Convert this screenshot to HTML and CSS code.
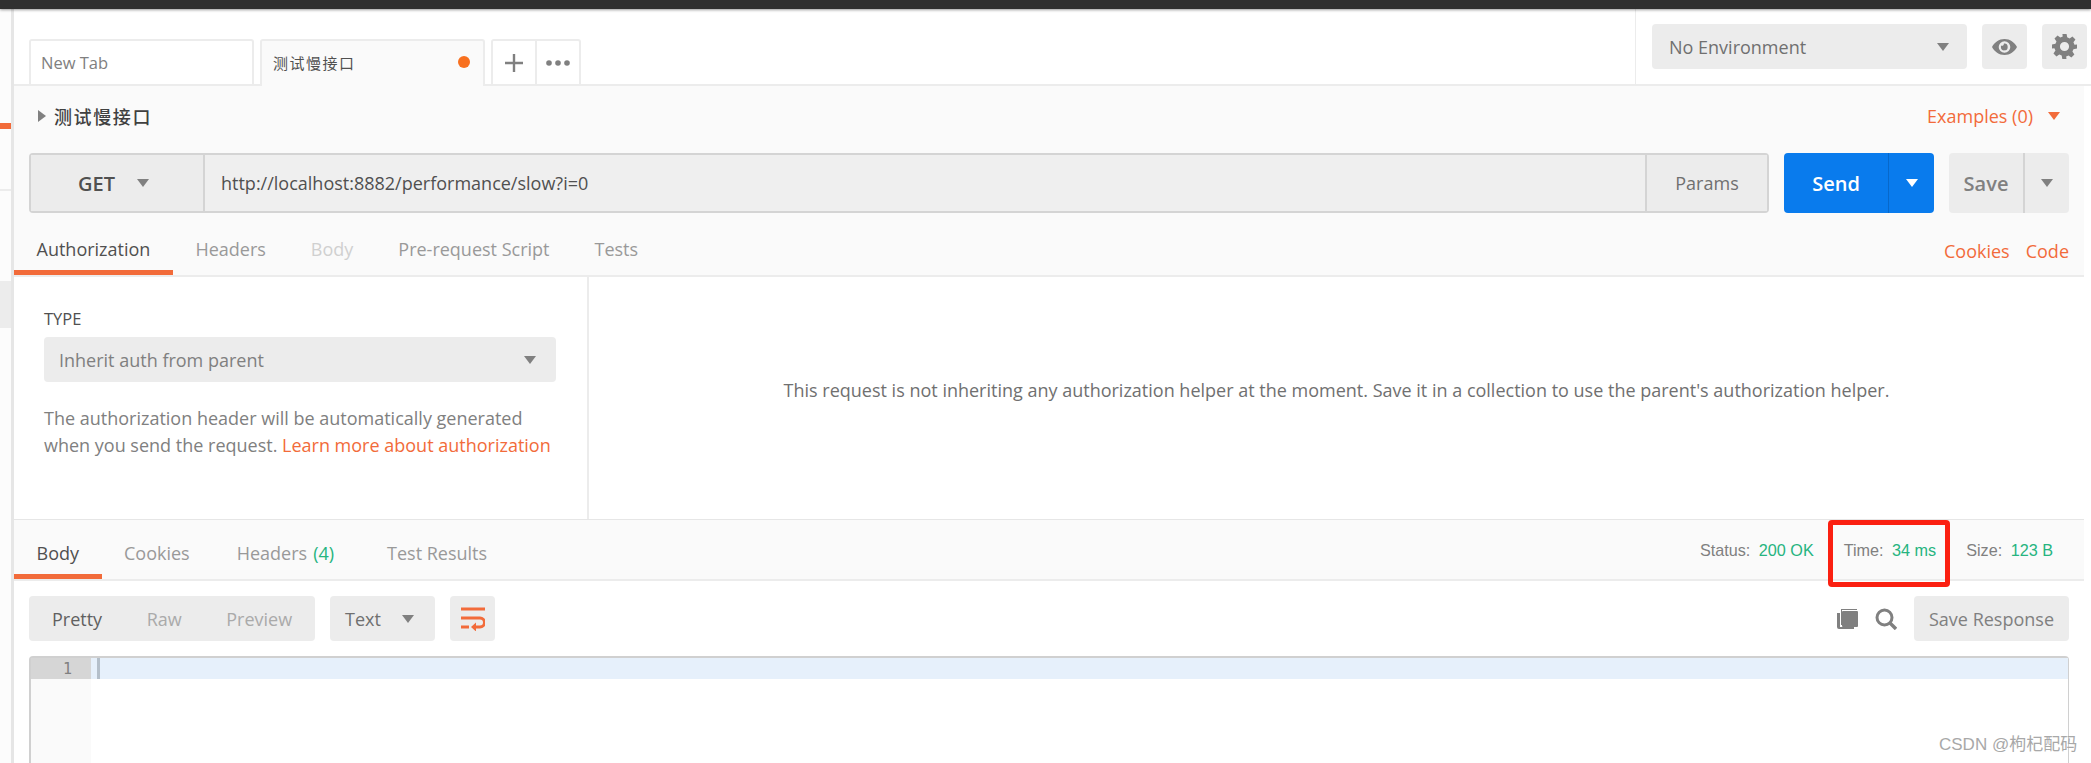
FILE: index.html
```html
<!DOCTYPE html>
<html lang="en">
<head>
    <meta charset="UTF-8">
    <title>Postman</title>
    <link rel="stylesheet" href="styles.css">
</head>
<body>
    <div class="topbar"></div>
    <div class="app">
        <div class="sidebar">
            <div class="side-mark"></div>
            <div class="side-line"></div>
            <div class="side-block"></div>
        </div>
        <div class="main">
            <div class="tabbar">
                <div class="tab">New Tab</div>
                <div class="tab tab-active">
                    <span class="tab-name">测试慢接口</span>
                    <span class="dot"></span>
                </div>
                <div class="tab-tools">
                    <div class="tab-tool">
                        <svg width="18" height="18" viewBox="0 0 18 18"><path d="M9 0v18M0 9h18" stroke="#808080" stroke-width="2.4" fill="none"/></svg>
                    </div>
                    <div class="tab-tool tab-more">
                        <svg width="24" height="6" viewBox="0 0 24 6"><circle cx="3" cy="3" r="2.8" fill="#808080"/><circle cx="12" cy="3" r="2.8" fill="#808080"/><circle cx="21" cy="3" r="2.8" fill="#808080"/></svg>
                    </div>
                </div>
                <div class="env">
                    <div class="env-select">
                        <span>No Environment</span>
                        <span class="caret"></span>
                    </div>
                    <div class="icon-btn">
                        <svg width="25" height="16" viewBox="0 0 25 16"><path fill-rule="evenodd" fill="#808080" d="M12.5 0C18 0 22.5 3.4 25 8c-2.500 4.600-7 8-12.500 8S2.500 12.600 0 8C2.500 3.400 7 0 12.500 0zm0 2.200a5.800 5.800 0 1 0 0 11.600 5.800 5.800 0 0 0 0-11.600zm-.6 2.400a3.400 3.400 0 1 1-3 3.400c0-.5.100-1 .3-1.400a1.900 1.900 0 0 0 2.700-2z"/></svg>
                    </div>
                    <div class="icon-btn">
                        <svg width="25" height="25" viewBox="0 0 24 24"><path fill="#808080" fill-rule="evenodd" d="M10 0h4l.6 3.200 2.300 1 2.700-1.900 2.900 2.900-1.900 2.700 1 2.300L24 10v4l-3.400.6-1 2.300 1.900 2.700-2.900 2.900-2.700-1.900-2.300 1L13.900 24h-4l-.6-3.400-2.300-1-2.700 1.900-2.900-2.900 1.900-2.700-1-2.300L0 14v-4l3.300-.6 1-2.300-1.900-2.700 2.900-2.900 2.700 1.900 2.300-1zM12 7.600a4.400 4.400 0 1 0 0 8.800 4.400 4.400 0 0 0 0-8.800z"/></svg>
                    </div>
                </div>
            </div>

            <div class="request">
                <div class="name-row">
                    <span class="arrow-right"></span>
                    <span class="req-name">测试慢接口</span>
                    <span class="examples">Examples (0)</span>
                    <span class="caret caret-orange"></span>
                </div>
                <div class="url-row">
                    <div class="url-box">
                        <div class="method">
                            <span>GET</span>
                            <span class="caret"></span>
                        </div>
                        <div class="url">http://localhost:8882/performance/slow?i=0</div>
                        <div class="params">Params</div>
                    </div>
                    <div class="split-btn send">
                        <div class="split-main">Send</div>
                        <div class="split-side"><span class="caret caret-white"></span></div>
                    </div>
                    <div class="split-btn save">
                        <div class="split-main">Save</div>
                        <div class="split-side"><span class="caret"></span></div>
                    </div>
                </div>
                <div class="tabs-row">
                    <div class="subtab subtab-on">Authorization</div>
                    <div class="subtab">Headers</div>
                    <div class="subtab subtab-off">Body</div>
                    <div class="subtab">Pre-request Script</div>
                    <div class="subtab">Tests</div>
                    <div class="links">
                        <span>Cookies</span>
                        <span>Code</span>
                    </div>
                </div>
            </div>

            <div class="auth">
                <div class="auth-left">
                    <div class="type-label">TYPE</div>
                    <div class="type-select">
                        <span>Inherit auth from parent</span>
                        <span class="caret"></span>
                    </div>
                    <p class="auth-text">The authorization header will be automatically generated<br>when you send the request. <span class="link">Learn more about authorization</span></p>
                </div>
                <div class="auth-right">This request is not inheriting any authorization helper at the moment. Save it in a collection to use the parent's authorization helper.</div>
            </div>

            <div class="response-bar">
                <div class="subtab subtab-on">Body</div>
                <div class="subtab">Cookies</div>
                <div class="subtab subtab-count">Headers <span class="green">(4)</span></div>
                <div class="subtab">Test Results</div>
                <div class="stats">
                    <span class="stat">Status: <b>200 OK</b></span>
                    <span class="stat">Time: <b>34 ms</b></span>
                    <span class="stat">Size: <b>123 B</b></span>
                </div>
                <div class="highlight-box"></div>
            </div>

            <div class="toolbar">
                <div class="view-group">
                    <span class="view view-on">Pretty</span>
                    <span class="view">Raw</span>
                    <span class="view">Preview</span>
                </div>
                <div class="format-select">
                    <span>Text</span>
                    <span class="caret"></span>
                </div>
                <div class="wrap-btn">
                    <svg width="24" height="24" viewBox="0 0 24 24"><path d="M0 2h24M0 11h19a4 4 0 0 1 0 9h-6M0 20h8" stroke="#f26b3a" stroke-width="3" fill="none"/><path d="M15 15.500v9l-5-4.500z" fill="#f26b3a"/></svg>
                </div>
                <div class="tool-right">
                    <svg width="22" height="22" viewBox="0 0 22 22"><path d="M5 1h16v1H6v15H5zM1 5h3v14h14v2H3a2 2 0 0 1-2-2z" fill="#808080"/><rect x="6" y="3" width="16" height="16" rx="1" fill="#808080"/></svg>
                    <svg width="22" height="22" viewBox="0 0 22 22"><circle cx="9.500" cy="9.500" r="7.500" stroke="#808080" stroke-width="3" fill="none"/><path d="M15 15l6 6" stroke="#808080" stroke-width="3.400"/></svg>
                    <div class="save-response">Save Response</div>
                </div>
            </div>

            <div class="editor">
                <div class="gutter">
                    <div class="line-no">1</div>
                </div>
                <div class="code">
                    <div class="code-line"><span class="cursor"></span></div>
                </div>
            </div>
        </div>
    </div>
    <div class="watermark">CSDN @枸杞配码</div>
</body>
</html>
```

FILE: styles.css
```css
* {
    box-sizing: border-box;
}
html, body {
    margin: 0;
    height: 763px;
    overflow: hidden;
}
body {
    position: relative;
    background: #fff;
    font-family: "Open Sans", "Noto Sans CJK SC", sans-serif;
    font-size: 18px;
    color: #808080;
}
.topbar {
    height: 9px;
    background: #303030;
    box-shadow: 0 1px 3px rgba(0, 0, 0, 0.4);
    position: relative;
}
.app {
    display: flex;
    height: 754px;
}

/* left edge of the sidebar */
.sidebar {
    width: 14px;
    flex: none;
    padding-top: 114px;
    border-right: 3px solid #e6e6e6;
    background: #fcfcfc;
}
.side-mark {
    height: 6px;
    background: #f26b3a;
}
.side-line {
    height: 2px;
    margin-top: 60px;
    background: #ececec;
}
.side-block {
    height: 47px;
    margin-top: 90px;
    background: #ececec;
}
.main {
    flex: 1;
    min-width: 0;
}

/* tabs */
.tabbar {
    display: flex;
    height: 77px;
    padding: 30px 0 0 15px;
    border-bottom: 2px solid #ececec;
}
.tab {
    width: 225px;
    height: 45px;
    margin-right: 6px;
    padding: 0 10px;
    display: flex;
    align-items: center;
    border: 2px solid #ececec;
    border-bottom: none;
    border-radius: 3px 3px 0 0;
    color: #808080;
    font-size: 16.500px;
}
.tab-active {
    height: 47px;
    padding: 0 10px 3px 11px;
    background: #fafafa;
    color: #505050;
    justify-content: space-between;
    position: relative;
    z-index: 1;
}
.tab-name {
    font-size: 15px;
    letter-spacing: 1.500px;
}
.dot {
    width: 12px;
    height: 12px;
    margin-right: 3px;
    border-radius: 50%;
    background: #f8701f;
}
.tab-tools {
    display: flex;
    height: 45px;
    border: 2px solid #ececec;
    border-bottom: none;
    border-radius: 3px 3px 0 0;
}
.tab-tool {
    width: 42px;
    display: flex;
    align-items: center;
    justify-content: center;
}
.tab-more {
    width: 44px;
    border-left: 2px solid #ececec;
}
.env {
    display: flex;
    gap: 15px;
    height: 75px;
    margin: -30px 0 0 auto;
    padding: 15px 4px 0 16px;
    border-left: 1px solid #ececec;
}
.env-select {
    width: 315px;
    height: 45px;
    padding: 0 18px 0 17px;
    display: flex;
    align-items: center;
    justify-content: space-between;
    background: #ececec;
    border-radius: 4px;
    color: #707070;
}
.icon-btn {
    width: 45px;
    height: 45px;
    display: flex;
    align-items: center;
    justify-content: center;
    background: #ececec;
    border-radius: 4px;
}
.caret {
    width: 0;
    height: 0;
    flex: none;
    border-left: 6px solid transparent;
    border-right: 6px solid transparent;
    border-top: 8px solid #808080;
}
.caret-orange {
    border-top-color: #f26b3a;
    margin-left: 15px;
}
.caret-white {
    border-top-color: #fff;
}

/* request */
.request {
    width: 2070px;
    height: 191px;
    background: #fafafa;
    border-bottom: 2px solid #ececec;
}
.name-row {
    display: flex;
    align-items: center;
    height: 60px;
    padding: 0 24px 0 24px;
}
.arrow-right {
    width: 0;
    height: 0;
    border-top: 6px solid transparent;
    border-bottom: 6px solid transparent;
    border-left: 8px solid #808080;
}
.req-name {
    margin-left: 8px;
    font-size: 18px;
    font-weight: 500;
    letter-spacing: 1.600px;
    color: #404040;
}
.examples {
    margin-left: auto;
    color: #f26b3a;
}
.url-row {
    display: flex;
    height: 60px;
    margin-top: 7px;
    padding-left: 15px;
}
.url-box {
    width: 1740px;
    display: flex;
    border: 2px solid #d4d4d4;
    border-radius: 4px;
    background: #efefef;
}
.method {
    width: 174px;
    display: flex;
    align-items: center;
    padding-left: 47px;
    gap: 22px;
    background: #ececec;
    border-right: 2px solid #d4d4d4;
    color: #505050;
    font-size: 20px;
    font-weight: 600;
}
.url {
    flex: 1;
    display: flex;
    align-items: center;
    padding-left: 16px;
    color: #505050;
}
.params {
    width: 122px;
    display: flex;
    align-items: center;
    justify-content: center;
    background: #ececec;
    border-left: 2px solid #d4d4d4;
    color: #707070;
}
.split-btn {
    display: flex;
    height: 60px;
    border-radius: 4px;
    font-size: 20px;
    font-weight: 600;
}
.split-main, .split-side {
    display: flex;
    align-items: center;
    justify-content: center;
}
.send {
    width: 150px;
    margin-left: 15px;
    background: #097bed;
    color: #fff;
}
.send .split-main {
    width: 104px;
}
.send .split-side {
    flex: 1;
    border-left: 1px solid #0768ca;
}
.save {
    width: 120px;
    margin-left: 15px;
    background: #ececec;
    color: #808080;
}
.save .split-main {
    width: 74px;
}
.save .split-side {
    flex: 1;
    border-left: 2px solid #d4d4d4;
}
.tabs-row {
    display: flex;
    height: 62px;
}
.subtab {
    display: flex;
    align-items: center;
    gap: 5px;
    height: 100%;
    padding: 15px 22.500px 0;
    color: #999;
    border-bottom: 5px solid transparent;
}
.subtab-on {
    color: #505050;
    border-bottom-color: #f26b3a;
}
.subtab-off {
    color: #d0d0d0;
}
.links {
    margin-left: auto;
    display: flex;
    align-items: center;
    gap: 16px;
    padding: 14px 15px 0 0;
    color: #f26b3a;
}

/* auth */
.auth {
    display: flex;
    width: 2070px;
    height: 243px;
    border-bottom: 1px solid #e6e6e6;
}
.auth-left {
    width: 575px;
    flex: none;
    padding: 32px 31px 0 30px;
    border-right: 2px solid #ececec;
}
.type-label {
    height: 20px;
    line-height: 20px;
    font-size: 16.500px;
    color: #505050;
}
.type-select {
    height: 45px;
    margin-top: 8px;
    padding: 0 20px 0 15px;
    display: flex;
    align-items: center;
    justify-content: space-between;
    background: #ececec;
    border-radius: 4px;
}
.auth-text {
    margin: 23px 0 0;
    line-height: 27px;
    white-space: nowrap;
}
.link {
    color: #f26b3a;
}
.auth-right {
    flex: 1;
    display: flex;
    align-items: center;
    justify-content: center;
    padding-bottom: 16px;
    color: #707070;
}

/* response */
.response-bar {
    position: relative;
    display: flex;
    width: 2070px;
    height: 61px;
    background: #fafafa;
    border-bottom: 2px solid #ececec;
}
.response-bar .subtab {
    padding-top: 11px;
}
.subtab-count {
    gap: 6px;
    margin: 0 8px 0 2px;
}
.green {
    color: #26b47f;
}
.stats {
    margin-left: auto;
    display: flex;
    align-items: center;
    gap: 30px;
    padding: 2px 31px 0 0;
    font-family: "Liberation Sans", Arial, sans-serif;
    font-size: 16.200px;
}
.stat b {
    font-weight: 400;
    color: #26b47f;
    margin-left: 4px;
}
.highlight-box {
    position: absolute;
    left: 1814px;
    top: 0;
    width: 122px;
    height: 67px;
    border: 5px solid #fb2011;
    border-radius: 4px;
    z-index: 2;
}
.toolbar {
    display: flex;
    align-items: center;
    height: 45px;
    margin-top: 15px;
    padding: 0 22px 0 15px;
}
.view-group {
    width: 286px;
    height: 45px;
    display: flex;
    align-items: center;
    gap: 44.500px;
    padding-left: 23px;
    background: #ececec;
    border-radius: 4px;
    color: #aaa;
}
.view-on {
    color: #606060;
}
.format-select {
    width: 105px;
    height: 45px;
    margin-left: 15px;
    padding: 0 21px 0 15px;
    display: flex;
    align-items: center;
    justify-content: space-between;
    background: #ececec;
    border-radius: 4px;
    color: #707070;
}
.wrap-btn {
    width: 45px;
    height: 45px;
    margin-left: 15px;
    display: flex;
    align-items: center;
    justify-content: center;
    background: #ececec;
    border-radius: 4px;
}
.tool-right {
    margin-left: auto;
    display: flex;
    align-items: center;
    gap: 17px;
}
.save-response {
    width: 155px;
    height: 45px;
    display: flex;
    align-items: center;
    justify-content: center;
    background: #ececec;
    border-radius: 4px;
    color: #808080;
}

/* editor */
.editor {
    display: flex;
    height: 120px;
    margin: 15px 22px 0 15px;
    border: 2px solid #d0d0d0;
    border-width: 2px 1px 0 2px;
    border-radius: 4px 4px 0 0;
}
.gutter {
    width: 60px;
    background: #fafafa;
}
.line-no {
    height: 21px;
    padding-right: 19px;
    background: #d6d6d6;
    text-align: right;
    font-family: "DejaVu Sans Mono", monospace;
    font-size: 15px;
    line-height: 23px;
    color: #808080;
}
.code {
    flex: 1;
}
.code-line {
    height: 21px;
    padding-left: 6px;
    background: #e6f0fb;
}
.cursor {
    display: block;
    width: 3px;
    height: 21px;
    background: #b4bfca;
}
.watermark {
    position: absolute;
    left: 1939px;
    top: 733px;
    font-family: "Liberation Sans", "Noto Sans CJK SC", sans-serif;
    font-size: 17px;
    line-height: 24px;
    white-space: nowrap;
    color: #a8a8a8;
}
```
